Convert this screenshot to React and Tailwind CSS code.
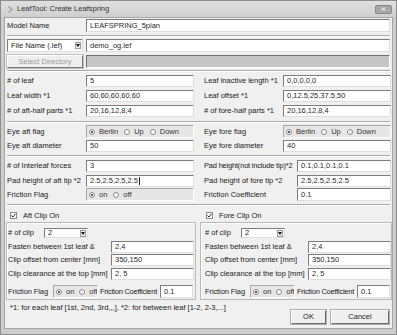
import React from "react";

const sunken =
  "border border-t-[#7c7c7c] border-l-[#7c7c7c] border-r-[#dedede] border-b-[#dedede]";

function Field({ value, w, cursor }) {
  return (
    <div
      className={`h-full bg-white ${sunken} flex items-center pl-[3px] text-[#2a2a2a] whitespace-nowrap overflow-hidden shrink-0 ${w}`}
    >
      {value}
      {cursor && <span className="inline-block w-px h-[8px] bg-[#222] ml-[1px]" />}
    </div>
  );
}

function Radio({ on }) {
  return (
    <span className="inline-flex w-[6px] h-[6px] rounded-full bg-white border border-[#8a8a8a] items-center justify-center shrink-0">
      {on && <span className="w-[2px] h-[2px] rounded-full bg-[#222]" />}
    </span>
  );
}

function RadioBox({ items, w, gap = "gap-[6px]" }) {
  return (
    <div
      className={`h-full bg-[#e6e6e6] border border-t-[#a8a8a8] border-l-[#a8a8a8] border-r-white border-b-white flex items-center pl-[2px] shrink-0 ${gap} ${w} text-[#333] overflow-hidden`}
    >
      {items.map((it, i) => (
        <span key={i} className="inline-flex items-center gap-[4px]">
          <Radio on={i === 0} />
          <span>{it}</span>
        </span>
      ))}
    </div>
  );
}

function Sep({ mt }) {
  return <div className={`h-[2px] border-t border-t-[#a9a9a9] border-b border-b-white ${mt}`} />;
}

function Half({ label, lw, children, w, tight }) {
  return (
    <div className={`flex items-center h-full ${w}`}>
      <div
        className={`${lw} shrink-0 text-[#222] whitespace-nowrap ${tight ? "tracking-[-0.2px]" : ""}`}
      >
        {label}
      </div>
      {children}
    </div>
  );
}

function Row({ h = "h-[12px]", mt, children }) {
  return <div className={`flex ${h} ${mt} gap-[10px]`}>{children}</div>;
}

function Select({ value, w }) {
  return (
    <div className={`h-full bg-white ${sunken} flex items-center pl-[3px] pr-[1px] shrink-0 ${w} text-[#222]`}>
      <span className="flex-1 whitespace-nowrap">{value}</span>
      <span className="w-[6px] h-[7px] bg-[#ececec] border border-[#9a9a9a] flex items-center justify-center">
        <svg width="4" height="3" viewBox="0 0 4 3">
          <path d="M0 0 L4 0 L2 3 Z" fill="#111" />
        </svg>
      </span>
    </div>
  );
}

function Check({ label }) {
  return (
    <div className="flex items-center gap-[6px] h-[9px] pl-[3px] text-[#222]">
      <span className="w-[7px] h-[7px] bg-white border border-[#8a8a8a] flex items-center justify-center">
        <svg width="5" height="5" viewBox="0 0 5 5">
          <path d="M0.5 2.5 L2 4 L4.5 0.8" stroke="#222" strokeWidth="1" fill="none" />
        </svg>
      </span>
      <span>{label}</span>
    </div>
  );
}

function ClipGroup({ w, pl }) {
  return (
    <div className={`h-[78px] border border-[#b9b9b9] shadow-[inset_1px_1px_0_#fff] ${pl} pr-[1px] pt-[5px] ${w}`}>
      <div className="flex items-center h-[10px]">
        <span className="w-[36px] shrink-0">{"# of clip"}</span>
        <Select value="2" w="w-[44px]" />
      </div>
      <div className="flex items-center h-[12px] mt-[3px]">
        <span className="w-[103px] shrink-0 whitespace-nowrap">{"Fasten between 1st leaf &"}</span>
        <Field value="2,4" w="w-[83px]" />
      </div>
      <div className="flex items-center h-[12px] mt-[1px]">
        <span className="w-[103px] shrink-0 whitespace-nowrap">{"Clip offset from center [mm]"}</span>
        <Field value="350,150" w="w-[83px]" />
      </div>
      <div className="flex items-center h-[12px] mt-[2px]">
        <span className="w-[103px] shrink-0 whitespace-nowrap">{"Clip clearance at the top [mm]"}</span>
        <Field value="2, 5" w="w-[83px]" />
      </div>
      <div className="flex items-center h-[13px] mt-[5px]">
        <span className="w-[45px] shrink-0 whitespace-nowrap tracking-[-0.1px]">{"Friction Flag"}</span>
        <RadioBox items={["on", "off"]} w="w-[45px]" gap="gap-[5px]" />
        <span className="ml-[2px] w-[60px] shrink-0 whitespace-nowrap tracking-[-0.25px]">
          {"Friction Coefficient"}
        </span>
        <Field value="0.1" w="w-[33px]" />
      </div>
    </div>
  );
}

function Button({ label, w }) {
  return (
    <div
      className={`h-[14px] ${w} bg-[#efefef] border border-t-white border-l-white border-r-[#6a6a6a] border-b-[#6a6a6a] shadow-[0_0_0_1px_#b0b0b0] flex items-center justify-center text-[#222]`}
    >
      {label}
    </div>
  );
}

export default function App() {
  return (
    <div className="w-[397px] h-[335px] bg-[#cdcdcd] border border-[#8e8e8e] flex flex-col font-['Liberation_Sans',Arial,sans-serif] text-[7.5px] leading-none overflow-hidden">
      <div className="h-[16px] shrink-0 flex items-center bg-gradient-to-b from-[#e0e0e0] to-[#cfcfcf] pl-[7px] pr-[4px]">
        <svg width="5" height="7" viewBox="0 0 5 7" className="mr-[4px]">
          <path d="M0.5 0.5 L4 3.5 L0.5 6.5" stroke="#9a9a9a" strokeWidth="1.2" fill="none" />
        </svg>
        <span className="text-[#333] text-[7.5px]">LeafTool: Create Leafspring</span>
        <div className="ml-auto w-[17px] h-[9px] rounded-[2px] bg-[#a7a7a7] border border-[#858585] flex items-center justify-center">
          <svg width="5" height="4" viewBox="0 0 5 4">
            <path d="M0.5 0.5 L4.5 3.5 M4.5 0.5 L0.5 3.5" stroke="#f4f4f4" strokeWidth="1" />
          </svg>
        </div>
      </div>
      <div className="mx-[3px] h-[312px] bg-[#f0f0f0] border border-[#a5a5a5] px-[2px] pt-[1px] text-[#222]">
        <div className="flex items-center h-[13px]">
          <span className="w-[79px] shrink-0">Model Name</span>
          <Field value="LEAFSPRING_5pian" w="flex-1" />
        </div>
        <Sep mt="mt-[3px]" />
        <div className="flex items-center h-[13px] mt-[2px]">
          <div className="w-[79px] shrink-0 h-full pr-[3px]">
            <Select value="File Name (.lef)" w="w-full" />
          </div>
          <Field value="demo_og.lef" w="flex-1" />
        </div>
        <div className="flex items-center h-[13px] mt-[3px]">
          <div className="w-[79px] shrink-0 h-full pr-[3px]">
            <div className="h-full bg-[#efefef] border border-t-white border-l-white border-r-[#777] border-b-[#777] shadow-[0_0_0_1px_#c0c0c0] flex items-center justify-center text-[#9a9a9a]">
              Select Directory
            </div>
          </div>
          <div className="flex-1 h-full bg-[#c6c6c6] border border-t-[#6f6f6f] border-l-[#6f6f6f] border-r-white border-b-white" />
        </div>
        <Sep mt="mt-[2px]" />

        <Row mt="mt-[3px]">
          <Half label="# of leaf" lw="w-[79px]" w="w-[187px]">
            <Field value="5" w="w-[108px]" />
          </Half>
          <Half label="Leaf inactive length *1" lw="w-[79px]" w="w-[187px]">
            <Field value="0,0,0,0,0" w="w-[108px]" />
          </Half>
        </Row>
        <Row mt="mt-[3px]">
          <Half label="Leaf width *1" lw="w-[79px]" w="w-[187px]">
            <Field value="60,60,60,60,60" w="w-[108px]" />
          </Half>
          <Half label="Leaf offset *1" lw="w-[79px]" w="w-[187px]">
            <Field value="0,12.5,25,37.5,50" w="w-[108px]" />
          </Half>
        </Row>
        <Row mt="mt-[3px]">
          <Half label="# of aft-half parts *1" lw="w-[79px]" w="w-[187px]">
            <Field value="20,16,12,8,4" w="w-[108px]" />
          </Half>
          <Half label="# of fore-half parts *1" lw="w-[79px]" w="w-[187px]">
            <Field value="20,16,12,8,4" w="w-[108px]" />
          </Half>
        </Row>
        <Sep mt="mt-[4px]" />

        <Row h="h-[13px]" mt="mt-[2px]">
          <Half label="Eye aft flag" lw="w-[79px]" w="w-[187px]">
            <RadioBox items={["Berlin", "Up", "Down"]} w="w-[108px]" />
          </Half>
          <Half label="Eye fore flag" lw="w-[79px]" w="w-[187px]">
            <RadioBox items={["Berlin", "Up", "Down"]} w="w-[108px]" />
          </Half>
        </Row>
        <Row mt="mt-[2px]">
          <Half label="Eye aft diameter" lw="w-[79px]" w="w-[187px]">
            <Field value="50" w="w-[108px]" />
          </Half>
          <Half label="Eye fore diameter" lw="w-[79px]" w="w-[187px]">
            <Field value="40" w="w-[108px]" />
          </Half>
        </Row>
        <Sep mt="mt-[3px]" />

        <Row mt="mt-[3px]">
          <Half label="# of Interleaf forces" lw="w-[79px]" w="w-[187px]">
            <Field value="3" w="w-[108px]" />
          </Half>
          <Half label="Pad height(not include tip)*2" lw="w-[93px]" w="w-[187px]" tight>
            <Field value="0.1,0.1,0.1,0.1" w="w-[94px]" />
          </Half>
        </Row>
        <Row mt="mt-[3px]">
          <Half label="Pad height of aft tip *2" lw="w-[79px]" w="w-[187px]">
            <Field value="2.5,2.5,2.5,2.5" w="w-[108px]" cursor />
          </Half>
          <Half label="Pad height of fore tip *2" lw="w-[93px]" w="w-[187px]">
            <Field value="2.5,2.5,2.5,2.5" w="w-[94px]" />
          </Half>
        </Row>
        <Row h="h-[13px]" mt="mt-[1px]">
          <Half label="Friction Flag" lw="w-[79px]" w="w-[187px]">
            <RadioBox items={["on", "off"]} w="w-[108px]" />
          </Half>
          <Half label="Friction Coefficient" lw="w-[93px]" w="w-[187px]">
            <Field value="0.1" w="w-[94px]" />
          </Half>
        </Row>
        <Sep mt="mt-[3px]" />

        <div className="flex mt-[5px]">
          <div className="w-[196px]">
            <Check label="Aft Clip On" />
          </div>
          <Check label="Fore Clip On" />
        </div>
        <div className="flex gap-[4px] mt-[2px] -mx-[1px]">
          <ClipGroup w="w-[190px]" pl="pl-[1px]" />
          <ClipGroup w="w-[192px]" pl="pl-[4px]" />
        </div>

        <div className="flex mt-[4px] pl-[3px]">
          <div className="flex-1 whitespace-nowrap text-[#222]">
            {"*1: for each leaf [1st, 2nd, 3rd,,,], *2: for between leaf [1-2, 2-3,...]"}
          </div>
        </div>
        <div className="flex justify-end gap-[5px] pr-[1px] -mt-[2px]">
          <Button label="OK" w="w-[35px]" />
          <Button label="Cancel" w="w-[58px]" />
        </div>
      </div>
    </div>
  );
}
